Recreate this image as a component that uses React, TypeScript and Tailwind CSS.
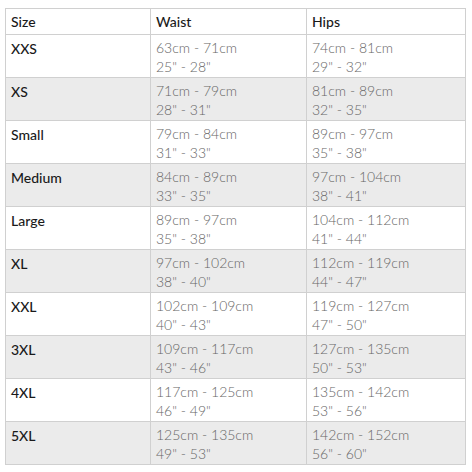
const rows: [string, string, string, string, string][] = [
  ["XXS", "63cm - 71cm", '25" - 28"', "74cm - 81cm", '29" - 32"'],
  ["XS", "71cm - 79cm", '28" - 31"', "81cm - 89cm", '32" - 35"'],
  ["Small", "79cm - 84cm", '31" - 33"', "89cm - 97cm", '35" - 38"'],
  ["Medium", "84cm - 89cm", '33" - 35"', "97cm - 104cm", '38" - 41"'],
  ["Large", "89cm - 97cm", '35" - 38"', "104cm - 112cm", '41" - 44"'],
  ["XL", "97cm - 102cm", '38" - 40"', "112cm - 119cm", '44" - 47"'],
  ["XXL", "102cm - 109cm", '40" - 43"', "119cm - 127cm", '47" - 50"'],
  ["3XL", "109cm - 117cm", '43" - 46"', "127cm - 135cm", '50" - 53"'],
  ["4XL", "117cm - 125cm", '46" - 49"', "135cm - 142cm", '53" - 56"'],
  ["5XL", "125cm - 135cm", '49" - 53"', "142cm - 152cm", '56" - 60"'],
];

export default function App() {
  return (
    <div className="h-[472px] w-[472px] bg-white pl-[5px] pt-[8px] font-['Lato',sans-serif] text-[14px]">
      <table className="w-[461px] table-fixed border-collapse border border-[#d0d0d0]">
        <colgroup>
          <col className="w-[145px]" />
          <col className="w-[156px]" />
          <col />
        </colgroup>
        <thead>
          <tr className="h-[26px] bg-white text-[#1a1a1a]">
            <th className="border border-[#d0d0d0] px-[5px] text-left font-medium">Size</th>
            <th className="border border-[#d0d0d0] px-[5px] text-left font-medium">Waist</th>
            <th className="border border-[#d0d0d0] px-[5px] text-left font-medium">Hips</th>
          </tr>
        </thead>
        <tbody>
          {rows.map(([size, wCm, wIn, hCm, hIn], i) => (
            <tr key={size} className={i % 2 === 1 ? "h-[43px] bg-[#ebebeb]" : "h-[43px] bg-white"}>
              <td className="border border-[#d0d0d0] px-[5px] pt-[3px] align-top font-medium text-[#1a1a1a]">
                {size}
              </td>
              <td className="border border-[#d0d0d0] px-[5px] pt-[3px] align-top font-light leading-[19px] text-[#666]">
                <div>{wCm}</div>
                <div>{wIn}</div>
              </td>
              <td className="border border-[#d0d0d0] px-[5px] pt-[3px] align-top font-light leading-[19px] text-[#666]">
                <div>{hCm}</div>
                <div>{hIn}</div>
              </td>
            </tr>
          ))}
        </tbody>
      </table>
    </div>
  );
}
